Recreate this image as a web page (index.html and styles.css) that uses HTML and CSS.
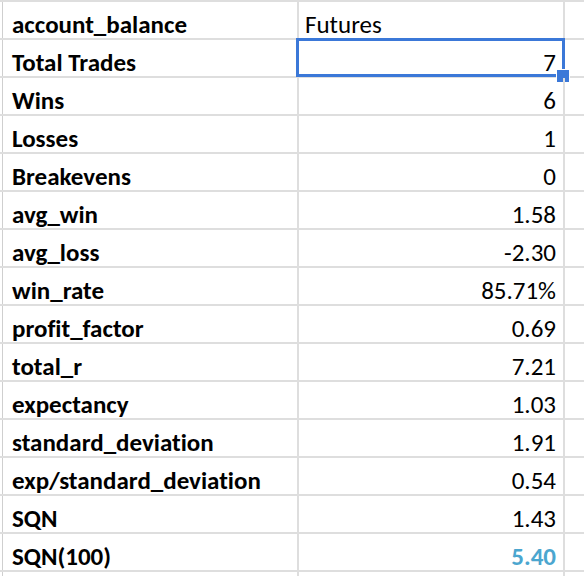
FILE: index.html
```html
<!DOCTYPE html>
<html>
<head>
<meta charset="utf-8">
<link rel="stylesheet" href="styles.css">
</head>
<body>
<div class="sheet">
  <div class="row"><div class="label">account_balance</div><div class="value text">Futures</div><div class="extra"></div></div>
  <div class="row"><div class="label">Total Trades</div><div class="value selected">7<span class="sel-box"></span><span class="sel-handle"></span></div><div class="extra"></div></div>
  <div class="row"><div class="label">Wins</div><div class="value">6</div><div class="extra"></div></div>
  <div class="row"><div class="label">Losses</div><div class="value">1</div><div class="extra"></div></div>
  <div class="row"><div class="label">Breakevens</div><div class="value">0</div><div class="extra"></div></div>
  <div class="row"><div class="label">avg_win</div><div class="value">1.58</div><div class="extra"></div></div>
  <div class="row"><div class="label">avg_loss</div><div class="value">-2.30</div><div class="extra"></div></div>
  <div class="row"><div class="label">win_rate</div><div class="value">85.71%</div><div class="extra"></div></div>
  <div class="row"><div class="label">profit_factor</div><div class="value">0.69</div><div class="extra"></div></div>
  <div class="row"><div class="label">total_r</div><div class="value">7.21</div><div class="extra"></div></div>
  <div class="row"><div class="label">expectancy</div><div class="value">1.03</div><div class="extra"></div></div>
  <div class="row"><div class="label">standard_deviation</div><div class="value">1.91</div><div class="extra"></div></div>
  <div class="row"><div class="label">exp/standard_deviation</div><div class="value">0.54</div><div class="extra"></div></div>
  <div class="row"><div class="label">SQN</div><div class="value">1.43</div><div class="extra"></div></div>
  <div class="row"><div class="label">SQN(100)</div><div class="value highlight">5.40</div><div class="extra"></div></div>
  <div class="row"><div class="label"></div><div class="value"></div><div class="extra"></div></div>
</div>
</body>
</html>
```
FILE: styles.css
```css
html, body {
  margin: 0;
  padding: 0;
  background: #ffffff;
  overflow: hidden;
}

.sheet {
  width: 584px;
  height: 576px;
  overflow: hidden;
  font-family: Carlito, Lato, "Open Sans", sans-serif;
  font-size: 25px;
  font-variant-ligatures: none;
  color: #000;
}

.row {
  display: grid;
  grid-template-columns: 3px 296px 266px 1fr;
  height: 38px;
  box-sizing: border-box;
  border-top: 2px solid #dedede;
}

.row::before {
  content: "";
  border-left: 1px solid #cfcfcf;
  margin-left: 2px;
}

.label,
.value,
.extra {
  box-sizing: border-box;
  height: 36px;
  padding-top: 9px;
  line-height: 27px;
  white-space: nowrap;
}

.label {
  font-weight: 700;
  padding-left: 9px;
  border-right: 2px solid #dedede;
}

.value {
  position: relative;
  text-align: right;
  padding-right: 7px;
  border-right: 2px solid #dedede;
}

.value.text {
  text-align: left;
  padding-left: 6px;
}

.highlight {
  color: #4ba6cf;
  font-weight: 700;
}

.sel-box {
  position: absolute;
  left: -3px;
  top: -2px;
  right: -2px;
  bottom: -1px;
  border: 3px solid #3b78d8;
}

.sel-handle {
  position: absolute;
  right: -7px;
  bottom: -7px;
  width: 12px;
  height: 12px;
  background: #3b78d8;
  border: 1px solid #ffffff;
}
```
